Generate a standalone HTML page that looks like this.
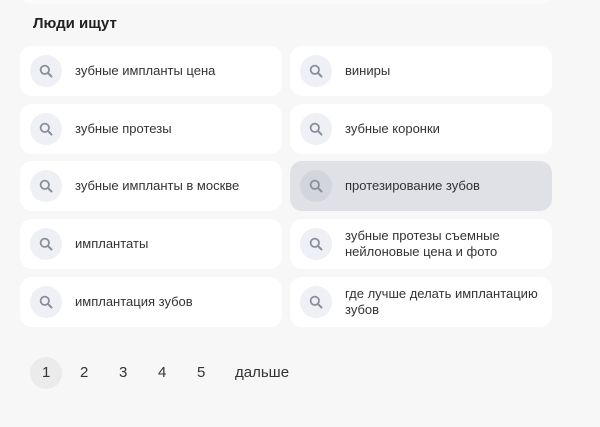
<!DOCTYPE html>
<html><head><meta charset="utf-8"><style>
body{margin:0;width:600px;height:427px;background:#f7f7f7;font-family:"Liberation Sans",Arial,sans-serif;position:relative;overflow:hidden}
.top{position:absolute;left:20px;top:-20px;width:532px;height:24px;background:#fbfbfb;border-radius:12px}
h2{position:absolute;left:33px;top:15px;margin:0;font-size:15px;font-weight:bold;color:#222}
.c{position:absolute;width:262px;height:50px;background:#fff;border-radius:12px;box-sizing:border-box}
.c.a{background:#e0e1e6}
.i{position:absolute;left:10px;top:9px;width:32px;height:32px;border-radius:50%;background:#eef0f5}
.c.a .i{background:#d3d5dc}
.i svg{position:absolute;left:9px;top:9px}
.t{position:absolute;left:55px;top:0;height:50px;display:flex;align-items:center;font-size:13px;line-height:16px;color:#333;width:200px}
.p{position:absolute;top:363px;font-size:15px;color:#333;line-height:20px}
.p1{position:absolute;left:30px;top:357px;width:32px;height:32px;border-radius:50%;background:#ebebeb}
</style></head><body>
<div class="top"></div>
<h2>Люди ищут</h2>
<div class="c" style="left:20px;top:46px"><div class="i"><svg width="14" height="14" viewBox="0 0 14 14"><circle cx="5.8" cy="5.8" r="4.2" fill="none" stroke="#8a8f99" stroke-width="1.8"/><path d="M9 9l3.5 3.5" stroke="#8a8f99" stroke-width="2" stroke-linecap="round"/></svg></div><div class="t">зубные импланты цена</div></div>
<div class="c" style="left:290px;top:46px"><div class="i"><svg width="14" height="14" viewBox="0 0 14 14"><circle cx="5.8" cy="5.8" r="4.2" fill="none" stroke="#8a8f99" stroke-width="1.8"/><path d="M9 9l3.5 3.5" stroke="#8a8f99" stroke-width="2" stroke-linecap="round"/></svg></div><div class="t">виниры</div></div>
<div class="c" style="left:20px;top:104px"><div class="i"><svg width="14" height="14" viewBox="0 0 14 14"><circle cx="5.8" cy="5.8" r="4.2" fill="none" stroke="#8a8f99" stroke-width="1.8"/><path d="M9 9l3.5 3.5" stroke="#8a8f99" stroke-width="2" stroke-linecap="round"/></svg></div><div class="t">зубные протезы</div></div>
<div class="c" style="left:290px;top:104px"><div class="i"><svg width="14" height="14" viewBox="0 0 14 14"><circle cx="5.8" cy="5.8" r="4.2" fill="none" stroke="#8a8f99" stroke-width="1.8"/><path d="M9 9l3.5 3.5" stroke="#8a8f99" stroke-width="2" stroke-linecap="round"/></svg></div><div class="t">зубные коронки</div></div>
<div class="c" style="left:20px;top:161px"><div class="i"><svg width="14" height="14" viewBox="0 0 14 14"><circle cx="5.8" cy="5.8" r="4.2" fill="none" stroke="#8a8f99" stroke-width="1.8"/><path d="M9 9l3.5 3.5" stroke="#8a8f99" stroke-width="2" stroke-linecap="round"/></svg></div><div class="t">зубные импланты в москве</div></div>
<div class="c a" style="left:290px;top:161px"><div class="i"><svg width="14" height="14" viewBox="0 0 14 14"><circle cx="5.8" cy="5.8" r="4.2" fill="none" stroke="#8a8f99" stroke-width="1.8"/><path d="M9 9l3.5 3.5" stroke="#8a8f99" stroke-width="2" stroke-linecap="round"/></svg></div><div class="t">протезирование зубов</div></div>
<div class="c" style="left:20px;top:219px"><div class="i"><svg width="14" height="14" viewBox="0 0 14 14"><circle cx="5.8" cy="5.8" r="4.2" fill="none" stroke="#8a8f99" stroke-width="1.8"/><path d="M9 9l3.5 3.5" stroke="#8a8f99" stroke-width="2" stroke-linecap="round"/></svg></div><div class="t">имплантаты</div></div>
<div class="c" style="left:290px;top:219px"><div class="i"><svg width="14" height="14" viewBox="0 0 14 14"><circle cx="5.8" cy="5.8" r="4.2" fill="none" stroke="#8a8f99" stroke-width="1.8"/><path d="M9 9l3.5 3.5" stroke="#8a8f99" stroke-width="2" stroke-linecap="round"/></svg></div><div class="t">зубные протезы съемные нейлоновые цена и фото</div></div>
<div class="c" style="left:20px;top:277px"><div class="i"><svg width="14" height="14" viewBox="0 0 14 14"><circle cx="5.8" cy="5.8" r="4.2" fill="none" stroke="#8a8f99" stroke-width="1.8"/><path d="M9 9l3.5 3.5" stroke="#8a8f99" stroke-width="2" stroke-linecap="round"/></svg></div><div class="t">имплантация зубов</div></div>
<div class="c" style="left:290px;top:277px"><div class="i"><svg width="14" height="14" viewBox="0 0 14 14"><circle cx="5.8" cy="5.8" r="4.2" fill="none" stroke="#8a8f99" stroke-width="1.8"/><path d="M9 9l3.5 3.5" stroke="#8a8f99" stroke-width="2" stroke-linecap="round"/></svg></div><div class="t">где лучше делать имплантацию зубов</div></div>
<div class="p1"></div>
<div class="p" style="left:42px">1</div>
<div class="p" style="left:80px">2</div>
<div class="p" style="left:119px">3</div>
<div class="p" style="left:158px">4</div>
<div class="p" style="left:197px">5</div>
<div class="p" style="left:235px">дальше</div>
</body></html>
